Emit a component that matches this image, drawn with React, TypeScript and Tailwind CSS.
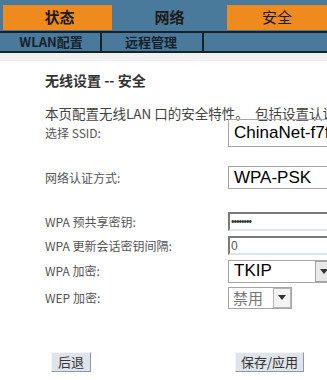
import React from 'react';

const cjk = "font-['Microsoft_YaHei','Noto_Sans_CJK_SC',sans-serif]";

function Row({ label, h, children }: { label: string; h: string; children: React.ReactNode }) {
  return (
    <div className={`flex items-center ${h}`}>
      <div className="w-[183px] shrink-0 text-[12px] text-[#555] leading-none">{label}</div>
      {children}
    </div>
  );
}

function Arrow() {
  return (
    <svg width="8" height="5" viewBox="0 0 8 5">
      <path d="M0 0h8L4 5z" fill="#333" />
    </svg>
  );
}

export default function App() {
  return (
    <div className={`w-[327px] h-[380px] overflow-hidden bg-white ${cjk}`}>
      {/* top tabs */}
      <div className="bg-[#4a7a9b] pt-[5px]">
        <div className="flex h-[25px] pl-[3px] text-[15px] font-bold text-[#1a1a1a]">
          <div className="w-[109px] bg-[#ee8a1e] flex items-center justify-center pl-[4px]">状态</div>
          <div className="w-[115px] flex items-center justify-center">网络</div>
          <div className="flex-1 bg-[#ee8a1e] flex items-center justify-center font-normal">安全</div>
        </div>
        <div className="mt-[1px] h-[22px] border-y-2 border-[#15222c] flex text-[13px] font-bold text-[#15222c]">
          <div className="w-[100px] flex items-center justify-center pl-[2px]">WLAN配置</div>
          <div className="w-[102px] border-l-2 border-[#15222c] flex items-center justify-center pr-[2px]">远程管理</div>
          <div className="flex-1 border-l-2 border-[#15222c]" />
        </div>
      </div>
      <div className="h-[8px] bg-[#f0f0f0]" />

      <div className="pl-[45px] w-[420px]">
        <div className="mt-[12px] text-[14px] font-bold text-[#333] leading-none">无线设置 -- 安全</div>
        <div className="mt-[20px] text-[13.5px] text-[#444] leading-none whitespace-nowrap">
          本页配置无线LAN 口的安全特性。&nbsp; 包括设置认证方式、加密方式
        </div>

        <div className="mt-[-2px]">
          <Row label="选择 SSID:" h="h-[29px]">
            <div className="h-[28px] w-[150px] border border-[#a5a5a5] flex items-center pl-[5px] text-[17px] text-black font-['Liberation_Sans',sans-serif]">
              ChinaNet-f7fs
            </div>
          </Row>
          <div className="h-[18px]" />
          <Row label="网络认证方式:" h="h-[24px]">
            <div className="h-[23px] w-[150px] border border-[#a5a5a5] flex items-center pl-[5px] text-[17px] text-black font-['Liberation_Sans',sans-serif]">
              WPA-PSK
            </div>
          </Row>

          <div className="h-[22px]" />
          <Row label="WPA 预共享密钥:" h="h-[20px]">
            <div className="h-[19px] w-[150px] border-2 border-[#7a7a7a] border-b-[#dfe3ea] border-r-[#dfe3ea] flex items-center pl-[1px] text-[10px] text-[#333] tracking-[-1px] font-['Liberation_Sans',sans-serif]">
              ••••••••
            </div>
          </Row>
          <div className="h-[4px]" />
          <Row label="WPA 更新会话密钥间隔:" h="h-[20px]">
            <div className="h-[19px] w-[150px] border-2 border-[#7a7a7a] border-b-[#dfe3ea] border-r-[#dfe3ea] flex items-center pl-[1px] text-[12px] text-[#555] font-['Liberation_Sans',sans-serif]">
              0
            </div>
          </Row>
          <div className="h-[4px]" />
          <Row label="WPA 加密:" h="h-[23px]">
            <div className="h-[23px] w-[150px] border border-[#a5a5a5] flex items-center text-[17px] text-black font-['Liberation_Sans',sans-serif]">
              <div className="w-[86px] pl-[5px]">TKIP</div>
              <div className="h-[21px] w-[17px] border border-[#a5a5a5] bg-[#e8e8e8] flex items-center justify-center">
                <Arrow />
              </div>
            </div>
          </Row>
          <div className="h-[4px]" />
          <Row label="WEP 加密:" h="h-[22px]">
            <div className="h-[22px] w-[64px] border border-[#a5a5a5] flex items-center text-[15px] text-[#777]">
              <div className="w-[44px] pl-[4px] leading-none">禁用</div>
              <div className="h-[20px] w-[18px] border border-[#b5b5b5] bg-[#f4f4f4] flex items-center justify-center">
                <Arrow />
              </div>
            </div>
          </Row>
        </div>

        <div className="mt-[43px] flex">
          <div className="ml-[6px] h-[20px] w-[40px] bg-[#dfe3ea] border border-[#f4f6f9] border-r-[#8f97a8] border-b-[#8f97a8] flex items-center justify-center text-[13px] text-[#333]">
            后退
          </div>
          <div className="ml-[144px] h-[20px] w-[69px] bg-[#dfe3ea] border border-[#f4f6f9] border-r-[#8f97a8] border-b-[#8f97a8] flex items-center justify-center text-[13px] text-[#333]">
            保存/应用
          </div>
        </div>
      </div>
    </div>
  );
}
